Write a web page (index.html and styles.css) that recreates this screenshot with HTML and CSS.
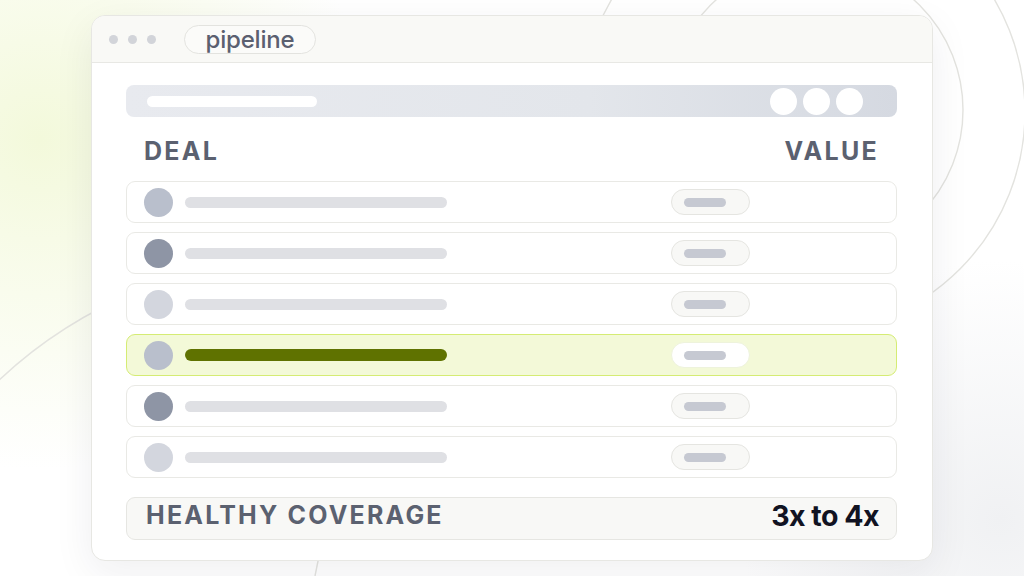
FILE: index.html
```html
<!DOCTYPE html>
<html lang="en">
  <head>
    <meta charset="UTF-8" />
    <title>Pipeline</title>
    <link rel="stylesheet" href="styles.css">
  </head>
  <body>
    <!-- decorative arcs behind the window -->
    <svg class="backdrop" width="1024" height="576" viewBox="0 0 1024 576">
      <circle cx="815" cy="110" r="148" />
      <circle cx="803" cy="112" r="222" />
      <path d="M -30 410 A 458 458 0 0 1 140 290" />
      <path d="M 321 548 A 600 600 0 0 0 315 576" />
    </svg>

    <div class="page">
      <div class="window">
        <div class="titlebar">
          <div class="dots">
            <span class="dot"></span>
            <span class="dot"></span>
            <span class="dot"></span>
          </div>
          <div class="tab">pipeline</div>
        </div>

        <div class="content">
          <div class="searchbar">
            <span class="search-field"></span>
            <div class="search-buttons">
              <span class="round"></span>
              <span class="round"></span>
              <span class="round"></span>
            </div>
          </div>

          <div class="table-head">
            <span>DEAL</span>
            <span>VALUE</span>
          </div>

          <div class="rows">
            <div class="row">
              <span class="avatar tone-mid"></span>
              <span class="deal-bar"></span>
              <span class="value-pill"><span class="value-bar"></span></span>
            </div>
            <div class="row">
              <span class="avatar tone-dark"></span>
              <span class="deal-bar"></span>
              <span class="value-pill"><span class="value-bar"></span></span>
            </div>
            <div class="row">
              <span class="avatar tone-light"></span>
              <span class="deal-bar"></span>
              <span class="value-pill"><span class="value-bar"></span></span>
            </div>
            <div class="row active">
              <span class="avatar tone-mid"></span>
              <span class="deal-bar"></span>
              <span class="value-pill"><span class="value-bar"></span></span>
            </div>
            <div class="row">
              <span class="avatar tone-dark"></span>
              <span class="deal-bar"></span>
              <span class="value-pill"><span class="value-bar"></span></span>
            </div>
            <div class="row">
              <span class="avatar tone-light"></span>
              <span class="deal-bar"></span>
              <span class="value-pill"><span class="value-bar"></span></span>
            </div>
          </div>

          <div class="summary">
            <span class="summary-label">HEALTHY COVERAGE</span>
            <span class="summary-value">3x to 4x</span>
          </div>
        </div>
      </div>
    </div>
  </body>
</html>
```

FILE: styles.css
```css
html,
body {
  margin: 0;
  width: 1024px;
  height: 576px;
  overflow: hidden;
}

body {
  font-family: Inter, "Noto Sans", sans-serif;
  background:
    radial-gradient(circle at 40px 140px, #f3f9db 0, rgba(243, 249, 219, 0.6) 120px, rgba(255, 255, 255, 0) 330px),
    radial-gradient(circle at 1000px 520px, #f0f1f3 0, rgba(240, 241, 243, 0) 260px),
    #ffffff;
  position: relative;
}

.backdrop {
  position: absolute;
  left: 0;
  top: 0;
}

.backdrop circle,
.backdrop path {
  fill: none;
  stroke: #e3e3df;
  stroke-width: 1.4;
}

.page {
  position: relative;
  padding: 15px 0 0 91px;
}

.window {
  width: 840px;
  height: 544px;
  background: #ffffff;
  border: 1px solid #e7e7e3;
  border-radius: 14px;
  box-shadow: 0 12px 40px rgba(30, 35, 50, 0.07);
  overflow: hidden;
}

/* title bar */

.titlebar {
  height: 46px;
  background: #f9f9f6;
  border-bottom: 1px solid #e8e8e4;
  display: flex;
  align-items: center;
  padding-left: 17px;
}

.dots {
  display: flex;
  gap: 10px;
}

.dot {
  width: 9px;
  height: 9px;
  border-radius: 50%;
  background: #d2d4d9;
}

.tab {
  margin-left: 28px;
  width: 130px;
  height: 27px;
  border: 1px solid #e3e3df;
  border-radius: 15px;
  background: #fbfbf9;
  display: flex;
  align-items: center;
  justify-content: center;
  font-size: 24px;
  font-weight: 500;
  color: #5b6070;
  letter-spacing: -0.2px;
}

/* body */

.content {
  padding: 22px 35px 0 34px;
}

.searchbar {
  height: 32px;
  border-radius: 8px;
  background: linear-gradient(to right, #e8eaef, #e3e6eb 60%, #d5d9e1);
  display: flex;
  align-items: center;
  justify-content: space-between;
  padding: 0 34px 0 21px;
}

.search-field {
  width: 170px;
  height: 11px;
  border-radius: 6px;
  background: #ffffff;
}

.search-buttons {
  display: flex;
  gap: 6px;
}

.round {
  width: 27px;
  height: 27px;
  border-radius: 50%;
  background: #ffffff;
}

.table-head {
  box-sizing: border-box;
  height: 64px;
  display: flex;
  align-items: center;
  justify-content: space-between;
  padding: 4px 18px 0 18px;
  font-size: 25px;
  font-weight: 700;
  letter-spacing: 2.3px;
  color: #5b6170;
}

.rows {
  display: flex;
  flex-direction: column;
  gap: 9px;
}

.row {
  height: 40px;
  border: 1px solid #e9e9e5;
  border-radius: 9px;
  display: flex;
  align-items: center;
  padding-left: 17px;
}

.avatar {
  width: 29px;
  height: 29px;
  border-radius: 50%;
}

.tone-mid {
  background: #b9bfcc;
}

.tone-dark {
  background: #8e95a5;
}

.tone-light {
  background: #d3d6de;
}

.deal-bar {
  margin-left: 12px;
  width: 262px;
  height: 11px;
  border-radius: 6px;
  background: #dfe0e4;
}

.value-pill {
  box-sizing: border-box;
  margin-left: 224px;
  width: 79px;
  height: 26px;
  border: 1px solid #e5e5e1;
  border-radius: 13px;
  background: #f8f8f6;
  display: flex;
  align-items: center;
  padding-left: 12px;
}

.value-bar {
  width: 42px;
  height: 9px;
  border-radius: 5px;
  background: #c6c9d2;
}

.row.active {
  background: #f3f9d8;
  border-color: #d5ec74;
}

.row.active .deal-bar {
  height: 12px;
  background: #5f7200;
}

.row.active .value-pill {
  background: #ffffff;
  border-color: #eef3dc;
}

.summary {
  box-sizing: border-box;
  margin-top: 19px;
  height: 43px;
  border: 1px solid #e6e6e2;
  border-radius: 9px;
  background: #f8f8f6;
  display: flex;
  align-items: center;
  justify-content: space-between;
  padding: 0 17px 7px 19px;
}

.summary-label {
  font-size: 25px;
  font-weight: 700;
  letter-spacing: 2.2px;
  color: #5b6170;
}

.summary-value {
  font-size: 28.5px;
  font-weight: 700;
  letter-spacing: -0.5px;
  color: #111322;
}
```
